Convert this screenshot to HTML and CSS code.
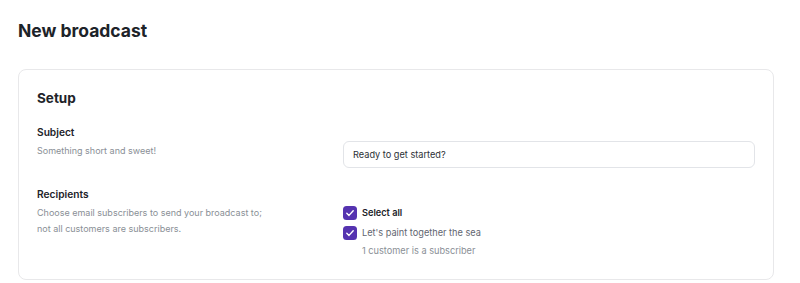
FILE: index.html
```html
<!DOCTYPE html>
<html>
<head>
<meta charset="utf-8">
<link rel="stylesheet" href="styles.css">
</head>
<body>
<main class="page">
  <h1 class="page-title">New broadcast</h1>
  <section class="card">
    <h2 class="card-title">Setup</h2>
    <div class="row">
      <div class="info">
        <h3 class="label">Subject</h3>
        <p class="hint">Something short and sweet!</p>
      </div>
      <div class="control control-input">
        <input class="text-input" type="text" value="Ready to get started?">
      </div>
    </div>
    <div class="row">
      <div class="info">
        <h3 class="label">Recipients</h3>
        <p class="hint">Choose email subscribers to send your broadcast to;<br>not all customers are subscribers.</p>
      </div>
      <div class="control control-checks">
        <label class="check check-strong">
          <span class="box"><svg viewBox="0 0 14 14" width="14" height="14"><path d="M3.8 7.2 L6 9.4 L10.2 4.8" fill="none" stroke="#fff" stroke-width="1.4" stroke-linecap="round" stroke-linejoin="round"/></svg></span>
          <span>Select all</span>
        </label>
        <label class="check">
          <span class="box"><svg viewBox="0 0 14 14" width="14" height="14"><path d="M3.8 7.2 L6 9.4 L10.2 4.8" fill="none" stroke="#fff" stroke-width="1.4" stroke-linecap="round" stroke-linejoin="round"/></svg></span>
          <span>Let's paint together the sea</span>
        </label>
        <div class="sub">1 customer is a subscriber</div>
      </div>
    </div>
  </section>
</main>
</body>
</html>
```
FILE: styles.css
```css
* { box-sizing: border-box; }
body {
  margin: 0;
  background: #fff;
  font-family: Inter, "Noto Sans", sans-serif;
  color: #1f2328;
}
.page {
  padding: 20px 26px 0 18px;
}
.page-title {
  margin: 0;
  font-size: 17.5px;
  line-height: 22px;
  font-weight: 700;
  color: #1d2329;
}
.card {
  margin-top: 27px;
  border: 1px solid #e8e8ea;
  border-radius: 8px;
  padding: 18px 18px 21px 18px;
}
.card-title {
  margin: 0 0 16px 0;
  font-size: 13.5px;
  line-height: 20px;
  font-weight: 700;
  color: #1d2329;
}
.row {
  display: grid;
  grid-template-columns: 306px 412px;
}
.row + .row { margin-top: 18px; }
.label {
  margin: 0;
  font-size: 10.2px;
  line-height: 16px;
  font-weight: 600;
  color: #1d2329;
}
.hint {
  margin: 3px 0 0 0;
  font-size: 9px;
  line-height: 16px;
  color: #8a8f96;
}
.control-input { padding-top: 17px; }
.text-input {
  display: block;
  width: 100%;
  height: 27px;
  border: 1px solid #e2e4e8;
  border-radius: 6px;
  padding: 0 9px;
  font-family: inherit;
  font-size: 9.2px;
  color: #2b3036;
  background: #fff;
  outline: none;
}
.control-checks {
  padding-top: 20px;
  display: flex;
  flex-direction: column;
}
.check {
  display: flex;
  align-items: center;
  gap: 5px;
  font-size: 9.2px;
  line-height: 14px;
  color: #5f6570;
}
.check + .check { margin-top: 6px; }
.check-strong { color: #1d2329; font-weight: 600; }
.box {
  width: 14px;
  height: 14px;
  border-radius: 3.5px;
  background: #5533b0;
  display: flex;
  align-items: center;
  justify-content: center;
}
.box svg { display: block; }
.sub {
  margin-top: 4px;
  padding-left: 19px;
  font-size: 9.2px;
  line-height: 14px;
  color: #8a8f96;
}
```
